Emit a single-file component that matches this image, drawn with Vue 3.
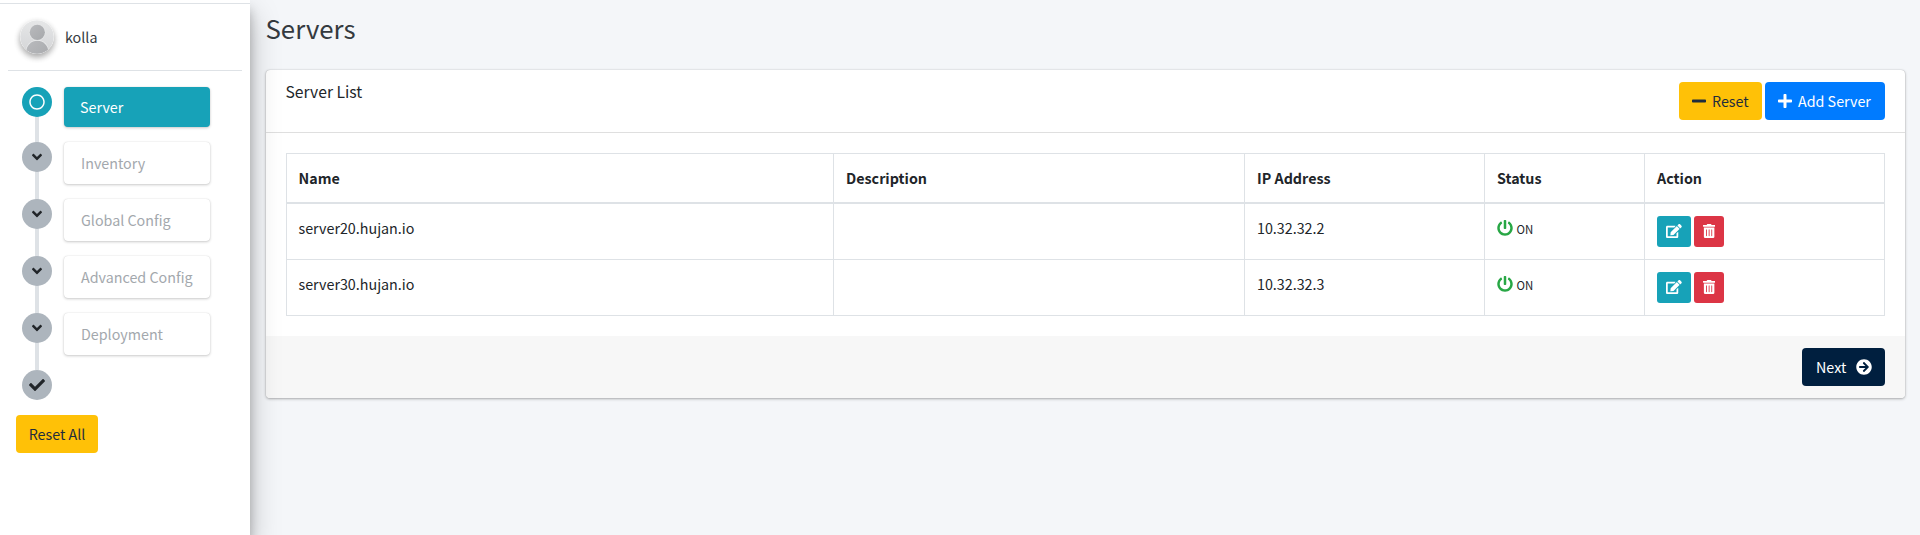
<script setup>
import { h } from 'vue'

const icons = {
  circle: [512, 'M256 8C119 8 8 119 8 256s111 248 248 248 248-111 248-248S393 8 256 8zm0 448c-110.5 0-200-89.5-200-200S145.5 56 256 56s200 89.5 200 200-89.5 200-200 200z'],
  down: [320, 'M143 352.3L7 216.3c-9.4-9.4-9.4-24.6 0-33.9l22.6-22.6c9.4-9.4 24.6-9.4 33.9 0l96.4 96.4 96.4-96.4c9.4-9.4 24.6-9.4 33.9 0l22.6 22.6c9.4 9.4 9.4 24.6 0 33.9l-136 136c-9.2 9.4-24.4 9.4-33.8 0z'],
  check: [512, 'M173.898 439.404l-166.4-166.4c-9.997-9.997-9.997-26.206 0-36.204l36.203-36.204c9.997-9.998 26.207-9.998 36.204 0L192 312.69 432.095 72.596c9.997-9.997 26.207-9.997 36.204 0l36.203 36.204c9.997 9.997 9.997 26.206 0 36.204l-294.4 294.401c-9.998 9.997-26.207 9.997-36.204-.001z'],
  minus: [448, 'M416 208H32c-17.67 0-32 14.33-32 32v32c0 17.67 14.33 32 32 32h384c17.67 0 32-14.33 32-32v-32c0-17.67-14.33-32-32-32z'],
  plus: [448, 'M416 208H272V64c0-17.67-14.33-32-32-32h-32c-17.67 0-32 14.33-32 32v144H32c-17.67 0-32 14.33-32 32v32c0 17.67 14.33 32 32 32h144v144c0 17.67 14.33 32 32 32h32c17.67 0 32-14.33 32-32V304h144c17.67 0 32-14.33 32-32v-32c0-17.67-14.33-32-32-32z'],
  power: [512, 'M400 54.1c63 45 104 118.6 104 201.9 0 136.8-110.8 247.7-247.5 248C120 504.3 8.2 393 8 256.4 7.9 173.1 48.9 99.3 111.8 54.2c11.7-8.3 28-4.8 35 7.7L162.6 90c5.9 10.5 3.1 23.8-6.6 31-41.5 30.8-68 79.6-68 134.9-.1 92.3 74.5 168.1 168 168.1 91.6 0 168.6-74.2 168-169.1-.3-51.8-24.7-101.8-68.1-134-9.7-7.2-12.4-20.5-6.5-30.9l15.8-28.1c7-12.4 23.2-16.1 34.8-7.8zM296 264V24c0-13.3-10.7-24-24-24h-32c-13.3 0-24 10.7-24 24v240c0 13.3 10.7 24 24 24h32c13.3 0 24-10.7 24-24z'],
  edit: [576, 'M402.6 83.2l90.2 90.2c3.8 3.8 3.8 10 0 13.8L274.4 405.6l-92.8 10.3c-12.4 1.4-22.9-9.1-21.5-21.5l10.3-92.8L388.8 83.2c3.8-3.8 10-3.8 13.8 0zm162-22.9l-48.8-48.8c-15.2-15.2-39.9-15.2-55.2 0l-35.4 35.4c-3.8 3.8-3.8 10 0 13.8l90.2 90.2c3.8 3.8 10 3.8 13.8 0l35.4-35.4c15.2-15.3 15.2-40 0-55.2zM384 346.2V448H64V128h229.8c3.2 0 6.2-1.3 8.5-3.5l40-40c7.6-7.6 2.2-20.5-8.5-20.5H48C21.5 64 0 85.5 0 112v352c0 26.5 21.5 48 48 48h352c26.5 0 48-21.5 48-48V306.2c0-10.7-12.9-16-20.5-8.5l-40 40c-2.2 2.3-3.5 5.3-3.5 8.5z'],
  trash: [448, 'M32 464a48 48 0 0 0 48 48h288a48 48 0 0 0 48-48V128H32zm272-256a16 16 0 0 1 32 0v224a16 16 0 0 1-32 0zm-96 0a16 16 0 0 1 32 0v224a16 16 0 0 1-32 0zm-96 0a16 16 0 0 1 32 0v224a16 16 0 0 1-32 0zM432 32H312l-9.4-18.7A24 24 0 0 0 281.1 0H166.8a23.72 23.72 0 0 0-21.4 13.3L136 32H16A16 16 0 0 0 0 48v32a16 16 0 0 0 16 16h416a16 16 0 0 0 16-16V48a16 16 0 0 0-16-16z'],
  arrow: [512, 'M256 8c137 0 248 111 248 248S393 504 256 504 8 393 8 256 119 8 256 8zm-28.9 143.6l75.5 72.4H120c-13.3 0-24 10.7-24 24v16c0 13.3 10.7 24 24 24h182.6l-75.5 72.4c-9.7 9.3-9.9 24.8-.4 34.3l11 10.9c9.4 9.4 24.6 9.4 33.9 0L404.3 273c9.4-9.4 9.4-24.6 0-33.9L271.6 106.3c-9.4-9.4-24.6-9.4-33.9 0l-11 10.9c-9.5 9.6-9.3 25.1.4 34.4z'],
}

const Icon = ({ name, size = 16 }) => {
  const [w, d] = icons[name]
  return h(
    'svg',
    { viewBox: `0 0 ${w} 512`, width: (w * size) / 512, height: size, fill: 'currentColor' },
    [h('path', { d })],
  )
}
Icon.props = ['name', 'size']

const steps = [
  { label: 'Server', icon: 'circle', active: true },
  { label: 'Inventory', icon: 'down' },
  { label: 'Global Config', icon: 'down' },
  { label: 'Advanced Config', icon: 'down' },
  { label: 'Deployment', icon: 'down' },
]
const columns = ['Name', 'Description', 'IP Address', 'Status', 'Action']
const servers = [
  { name: 'server20.hujan.io', description: '', ip: '10.32.32.2', status: 'ON' },
  { name: 'server30.hujan.io', description: '', ip: '10.32.32.3', status: 'ON' },
]
</script>

<template>
  <div class="layout">
    <aside class="sidebar">
      <div class="user">
        <svg class="avatar" viewBox="0 0 34 34" width="34" height="34">
          <defs>
            <linearGradient id="disc" x1="0" y1="0" x2="0" y2="1">
              <stop offset="0" stop-color="#e6e7e8" />
              <stop offset="1" stop-color="#d3d4d6" />
            </linearGradient>
            <linearGradient id="person" x1="0" y1="0" x2="1" y2="1">
              <stop offset="0" stop-color="#b9babd" />
              <stop offset="1" stop-color="#a6a8ab" />
            </linearGradient>
            <clipPath id="round"><circle cx="17" cy="17" r="16.8" /></clipPath>
          </defs>
          <g clip-path="url(#round)">
            <rect width="34" height="34" fill="url(#disc)" />
            <ellipse cx="17.3" cy="32" rx="11.6" ry="12.2" fill="#e9eaeb" />
            <ellipse cx="17.3" cy="32" rx="11" ry="11.2" fill="url(#person)" />
            <circle cx="17.3" cy="12.3" r="8.4" fill="#e4e5e6" />
            <circle cx="17.3" cy="12.3" r="7.6" fill="url(#person)" />
          </g>
        </svg>
        <span class="user-name">kolla</span>
      </div>
      <ul class="steps">
        <li v-for="s in steps" :key="s.label" class="step" :class="{ active: s.active }">
          <div class="rail"><span class="dot"><Icon :name="s.icon" /></span></div>
          <div class="step-box">{{ s.label }}</div>
        </li>
        <li class="step last">
          <div class="rail"><span class="dot"><Icon name="check" /></span></div>
        </li>
      </ul>
      <button class="btn warning reset-all">Reset All</button>
    </aside>

    <main class="content">
      <h1>Servers</h1>
      <section class="card">
        <header class="card-header">
          <h3>Server List</h3>
          <div class="tools">
            <button class="btn warning"><Icon name="minus" />Reset</button>
            <button class="btn primary"><Icon name="plus" />Add Server</button>
          </div>
        </header>
        <div class="card-body">
          <table>
            <colgroup>
              <col class="c-name" /><col class="c-desc" /><col class="c-ip" /><col class="c-status" /><col class="c-action" />
            </colgroup>
            <thead>
              <tr><th v-for="c in columns" :key="c">{{ c }}</th></tr>
            </thead>
            <tbody>
              <tr v-for="s in servers" :key="s.name">
                <td>{{ s.name }}</td>
                <td>{{ s.description }}</td>
                <td>{{ s.ip }}</td>
                <td><div class="status"><Icon name="power" /><small>{{ s.status }}</small></div></td>
                <td>
                  <div class="actions">
                    <button class="btn-sm info"><Icon name="edit" :size="14" /></button>
                    <button class="btn-sm danger"><Icon name="trash" :size="14" /></button>
                  </div>
                </td>
              </tr>
            </tbody>
          </table>
        </div>
        <footer class="card-footer">
          <button class="btn navy">Next<Icon name="arrow" /></button>
        </footer>
      </section>
    </main>
  </div>
</template>

<style>
body {
  margin: 0;
  background: #f4f6f9;
}
</style>

<style scoped>
* {
  box-sizing: border-box;
}
.layout {
  display: flex;
  height: 535px;
  overflow: hidden;
  background: #f4f6f9;
  color: #212529;
  font: 14.3px/24px "Noto Sans CJK SC", "Noto Sans", sans-serif;
}
svg {
  display: block;
  flex: none;
}
.sidebar {
  position: relative;
  z-index: 1;
  flex: none;
  width: 250px;
  padding-top: 3px;
  background: linear-gradient(#dee2e6, #dee2e6) 0 3px / 100% 1px no-repeat #fff;
  box-shadow: 0 14px 28px rgba(0, 0, 0, 0.25), 0 10px 10px rgba(0, 0, 0, 0.22);
}
.user {
  display: flex;
  align-items: flex-start;
  height: 68px;
  margin: 0 8px;
  padding: 17px 0 0 12px;
  border-bottom: 1px solid #dee2e6;
}
.avatar {
  border-radius: 50%;
  box-shadow: 0 3px 6px rgba(0, 0, 0, 0.16), 0 3px 6px rgba(0, 0, 0, 0.23);
}
.user-name {
  margin: 5px 0 0 11px;
  color: #343a40;
}
.steps {
  margin: 16px 0 0;
  padding: 0 0 0 22px;
  list-style: none;
}
.step {
  display: flex;
  gap: 12px;
  height: 57px;
}
.step.active {
  height: 55px;
}
.step.last {
  height: 30px;
}
.rail {
  width: 30px;
  background: linear-gradient(#dee2e6, #dee2e6) 13px 0 / 4px 100% no-repeat;
}
.last .rail {
  background: none;
}
.dot {
  display: flex;
  align-items: center;
  justify-content: center;
  width: 30px;
  height: 30px;
  padding-bottom: 1px;
  border-radius: 50%;
  background: #adb5bd;
}
.active .dot {
  background: #17a2b8;
  color: #fff;
}
.step-box {
  width: 146px;
  height: 42px;
  padding: 9px 17px;
  border-radius: 4px;
  background: #fff;
  color: #a3a8ad;
  line-height: 24px;
  white-space: nowrap;
  box-shadow: 0 1px 3px rgba(0, 0, 0, 0.2), 0 0 1px rgba(0, 0, 0, 0.16);
}
.active .step-box {
  height: 40px;
  padding: 8px 16px;
  background: #17a2b8;
  color: #fff;
}
.btn {
  display: inline-flex;
  align-items: center;
  height: 38px;
  padding: 0 13px;
  border: 0;
  border-radius: 4px;
  font: inherit;
  white-space: nowrap;
}
.warning {
  background: #ffc107;
  color: #1f2d3d;
}
.primary {
  background: #007bff;
  color: #fff;
}
.navy {
  width: 83px;
  padding: 0 13px 0 14px;
  justify-content: space-between;
  background: #001f3f;
  color: #fff;
}
.reset-all {
  justify-content: center;
  width: 82px;
  margin: 15px 0 0 16px;
}
.content {
  flex: 1;
  padding: 0 15px 0 16px;
}
h1 {
  height: 70px;
  margin: 0 0 0 -0.5px;
  padding-top: 10px;
  color: #343a40;
  font-size: 25.8px;
  font-weight: 400;
  line-height: 36px;
}
.card {
  height: 328px;
  border-radius: 4px;
  background: #fff;
  box-shadow: 0 0 1px rgba(0, 0, 0, 0.3), 0 1px 3px rgba(0, 0, 0, 0.3);
  overflow: hidden;
}
.card-header {
  display: flex;
  justify-content: space-between;
  height: 63px;
  padding: 12px 20px 0;
  border-bottom: 1px solid #dfdfdf;
}
h3 {
  margin: -3px 0 0 -0.5px;
  font-size: 15.7px;
  font-weight: 400;
  line-height: 26px;
}
.tools {
  display: flex;
  gap: 3px;
}
.tools .btn {
  gap: 6px;
}
.tools .warning {
  width: 83px;
}
.tools .primary {
  width: 120px;
}
.card-body {
  height: 203px;
  padding: 20px 20px 0;
}
table {
  width: 1599px;
  table-layout: fixed;
  border-spacing: 0;
  border: solid #dee2e6;
  border-width: 0 1px 1px 0;
}
.c-name {
  width: 547px;
}
.c-desc {
  width: 411px;
}
.c-ip,
.c-action {
  width: 240px;
}
.c-status {
  width: 160px;
}
th,
td {
  padding: 12px 12px 0;
  border: solid #dee2e6;
  border-width: 1px 0 0 1px;
  text-align: left;
  vertical-align: top;
}
th:first-child,
td:first-child {
  padding-left: 11.5px;
}
th {
  height: 49px;
  font-weight: 700;
}
td {
  height: 56px;
}
tbody tr:first-child td {
  height: 57px;
  border-top-width: 2px;
}
.status {
  display: flex;
  align-items: center;
  gap: 3.5px;
  padding-top: 1px;
}
.status svg {
  margin-top: -2px;
  color: #28a745;
}
small {
  font-size: 11.4px;
}
.actions {
  display: flex;
  gap: 3px;
}
.btn-sm {
  display: flex;
  justify-content: center;
  width: 34px;
  height: 31px;
  padding: 8px 0 0;
  border: 0;
  border-radius: 3px;
  color: #fff;
}
.info {
  background: #17a2b8;
}
.danger {
  width: 30px;
  background: #dc3545;
}
.card-footer {
  display: flex;
  justify-content: flex-end;
  height: 62px;
  padding: 12px 20px;
  background: #f7f7f7;
}
</style>
